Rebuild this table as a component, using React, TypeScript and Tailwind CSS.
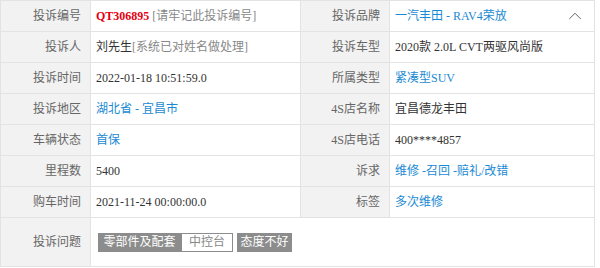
import { ChevronUp } from "lucide-react";

const font = { fontFamily: '"Liberation Serif", "Noto Sans CJK SC", serif' };

function Label({ children }: { children: React.ReactNode }) {
  return (
    <td className="w-[90px] bg-[#f2f2f2] border border-[#e3e3e3] pr-[9px] text-right text-[#666] align-middle">
      {children}
    </td>
  );
}

function Value({ children, link, span }: { children?: React.ReactNode; link?: boolean; span?: number }) {
  return (
    <td
      colSpan={span}
      className={
        link
          ? "border border-[#e3e3e3] pl-[5px] text-[#1a8ad4] align-middle"
          : "border border-[#e3e3e3] pl-[5px] text-[#333] align-middle"
      }
    >
      {children}
    </td>
  );
}

export default function App() {
  return (
    <div className="w-[600px] h-[268px] bg-white text-[12px]" style={font}>
      <table className="w-[595px] border-collapse table-fixed">
        <colgroup>
          <col className="w-[90px]" />
          <col className="w-[210px]" />
          <col className="w-[89px]" />
          <col />
        </colgroup>
        <tbody>
          <tr className="h-[31px]">
            <Label>投诉编号</Label>
            <Value>
              <span className="text-[#e60012] font-bold">QT306895</span>
              <span className="text-[#888]"> [请牢记此投诉编号]</span>
            </Value>
            <Label>投诉品牌</Label>
            <Value link>
              <div className="flex items-center justify-between pr-[8px]">
                <span>一汽丰田 - RAV4荣放</span>
                <ChevronUp className="w-[22px] h-[22px] text-[#555]" strokeWidth={1} />
              </div>
            </Value>
          </tr>
          <tr className="h-[31px]">
            <Label>投诉人</Label>
            <Value>
              刘先生<span className="text-[#888]">[系统已对姓名做处理]</span>
            </Value>
            <Label>投诉车型</Label>
            <Value>2020款 2.0L CVT两驱风尚版</Value>
          </tr>
          <tr className="h-[31px]">
            <Label>投诉时间</Label>
            <Value>2022-01-18 10:51:59.0</Value>
            <Label>所属类型</Label>
            <Value link>紧凑型SUV</Value>
          </tr>
          <tr className="h-[31px]">
            <Label>投诉地区</Label>
            <Value link>湖北省 - 宜昌市</Value>
            <Label>4S店名称</Label>
            <Value>宜昌德龙丰田</Value>
          </tr>
          <tr className="h-[31px]">
            <Label>车辆状态</Label>
            <Value link>首保</Value>
            <Label>4S店电话</Label>
            <Value>400****4857</Value>
          </tr>
          <tr className="h-[31px]">
            <Label>里程数</Label>
            <Value>5400</Value>
            <Label>诉求</Label>
            <Value link>维修 -召回 -赔礼/改错</Value>
          </tr>
          <tr className="h-[31px]">
            <Label>购车时间</Label>
            <Value>2021-11-24 00:00:00.0</Value>
            <Label>标签</Label>
            <Value link>多次维修</Value>
          </tr>
          <tr className="h-[49px]">
            <Label>投诉问题</Label>
            <Value span={3}>
              <div className="flex items-center">
                <span className="h-[19px] w-[83px] bg-[#8c8c8c] text-white flex items-center justify-center ml-[2px]">
                  零部件及配套
                </span>
                <span className="h-[19px] w-[52px] border border-[#8c8c8c] text-[#888] flex items-center justify-center">
                  中控台
                </span>
                <span className="h-[19px] w-[55px] bg-[#8c8c8c] text-white flex items-center justify-center ml-[4px]">
                  态度不好
                </span>
              </div>
            </Value>
          </tr>
        </tbody>
      </table>
    </div>
  );
}
